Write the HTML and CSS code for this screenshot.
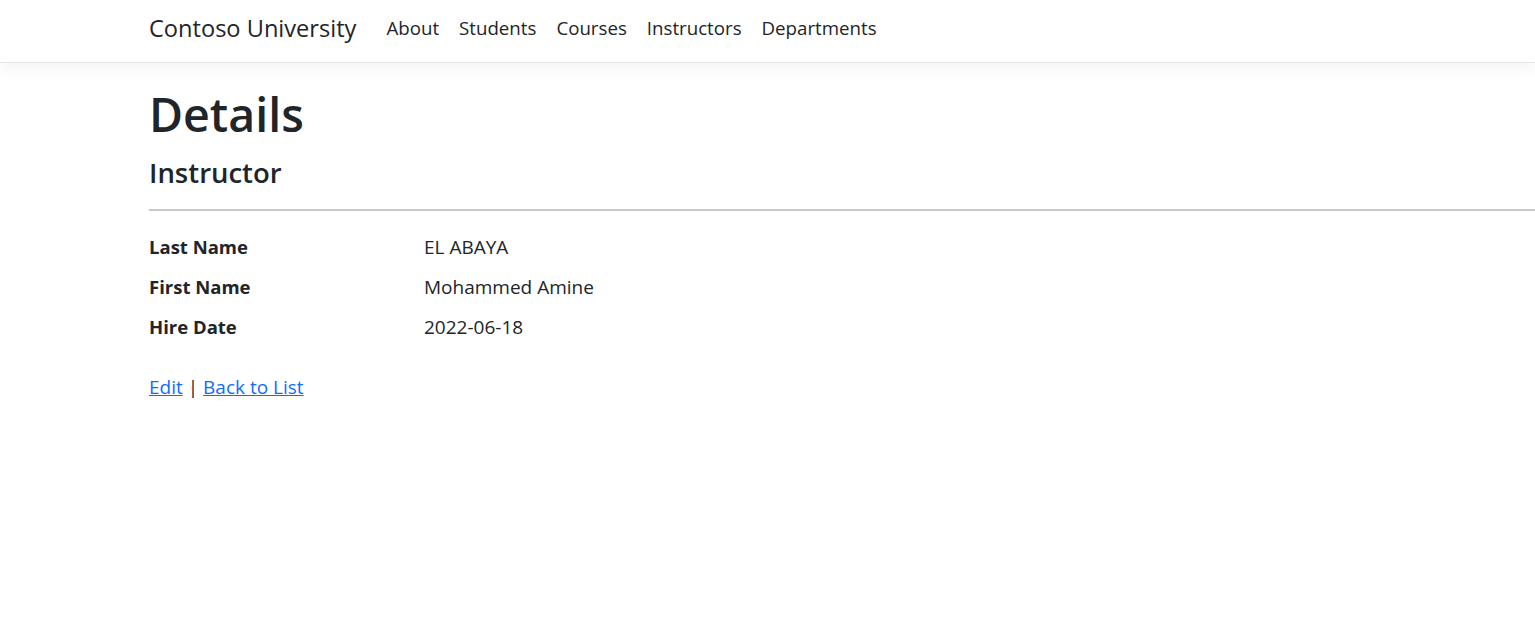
FILE: index.html
```html
<!DOCTYPE html>
<html lang="en">
<head>
<meta charset="utf-8">
<title>Details - Contoso University</title>
<link rel="stylesheet" href="styles.css">
</head>
<body>
<header>
  <nav class="navbar">
    <div class="nav-inner">
      <a class="brand" href="#">Contoso University</a>
      <ul class="nav-links">
        <li><a href="#">About</a></li>
        <li><a href="#">Students</a></li>
        <li><a href="#">Courses</a></li>
        <li><a href="#">Instructors</a></li>
        <li><a href="#">Departments</a></li>
      </ul>
    </div>
  </nav>
</header>
<main class="main">
  <h1 class="title">Details</h1>
  <div>
    <h4 class="subtitle">Instructor</h4>
    <hr class="divider">
    <dl class="details">
      <dt>Last Name</dt>
      <dd>EL ABAYA</dd>
      <dt>First Name</dt>
      <dd>Mohammed Amine</dd>
      <dt>Hire Date</dt>
      <dd>2022-06-18</dd>
    </dl>
  </div>
  <div class="actions">
    <a href="#">Edit</a> | <a href="#">Back to List</a>
  </div>
</main>
</body>
</html>
```
FILE: styles.css
```css
html, body {
  margin: 0;
  padding: 0;
}
body {
  font-family: "Open Sans", "Noto Sans", sans-serif;
  font-size: 19px;
  line-height: 30px;
  color: #212529;
  background: #fff;
  overflow: hidden;
}
.navbar {
  height: 62px;
  border-bottom: 1px solid #e5e5e5;
  box-shadow: 0 5px 15px rgba(0, 0, 0, 0.05);
  background: #fff;
}
.nav-inner {
  height: 100%;
  display: flex;
  align-items: center;
  padding-left: 149px;
}
.brand {
  font-size: 23.6px;
  line-height: 36px;
  color: #212529;
  text-decoration: none;
  margin-right: 20px;
  padding-bottom: 6px;
}
.nav-links {
  display: flex;
  list-style: none;
  margin: 0;
  padding: 0;
  padding-bottom: 6px;
  font-size: 18.7px;
}
.nav-links a {
  display: block;
  padding: 0 10px;
  color: #212529;
  text-decoration: none;
}
.main {
  padding-left: 149px;
  padding-top: 21px;
}
.title {
  margin: 0 0 11px;
  font-size: 46.5px;
  line-height: 60px;
  font-weight: 600;
}
.subtitle {
  margin: 0 0 10px;
  font-size: 27.5px;
  line-height: 36px;
  font-weight: 600;
}
.divider {
  margin: 18px 0 21px;
  border: 0;
  border-top: 2px solid #c8c9ca;
  height: 0;
}
.details {
  display: grid;
  grid-template-columns: 275px 1fr;
  margin: 0 0 20px;
}
.details dt {
  font-weight: 700;
  font-size: 18.5px;
}
.details dd {
  margin: 0 0 10px;
}
.actions a {
  color: #0d6efd;
  text-decoration: underline;
}
```
